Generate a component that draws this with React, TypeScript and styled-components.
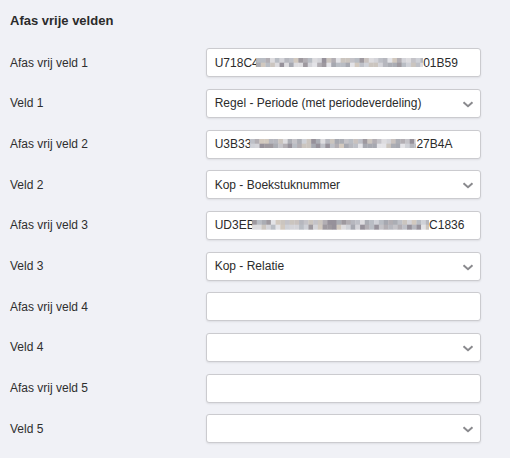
import React from "react";
import styled, { createGlobalStyle } from "styled-components";

const GlobalStyle = createGlobalStyle`
  html, body {
    margin: 0;
    padding: 0;
    background: #f0f1f6;
  }
  body {
    font-family: "Liberation Sans", Arial, sans-serif;
    color: #333;
  }
`;

const Page = styled.div`
  width: 510px;
  height: 458px;
  box-sizing: border-box;
  padding: 12px 29px 0 10px;
  background: #f0f1f6;
  overflow: hidden;
`;

const Title = styled.h3`
  margin: 0 0 18.3px 0;
  font-size: 13px;
  line-height: 18px;
  font-weight: bold;
  color: #2b2b2b;
`;

const Form = styled.div`
  display: grid;
  grid-template-columns: 195.7px 275.3px;
  grid-auto-rows: 29px;
  row-gap: 11.67px;
  align-items: center;
`;

const Label = styled.div`
  font-size: 12px;
  line-height: 16px;
  color: #2e2e2e;
`;

const Box = styled.div`
  position: relative;
  box-sizing: border-box;
  height: 29px;
  display: flex;
  align-items: center;
  padding: 0 8px;
  background: #fff;
  border: 1px solid #cbcbcf;
  border-radius: 3px;
  box-shadow: 0 1px 2px rgba(0, 0, 0, 0.08);
  font-size: 12px;
  color: #2b2b2b;
  white-space: nowrap;
  overflow: hidden;
`;

const Chevron = styled.svg`
  position: absolute;
  right: 5.5px;
  top: 50%;
  margin-top: -2.5px;
`;

const Fragment = styled.span`
  position: relative;
  z-index: 0;
`;

const MosaicSvg = styled.svg<{ $shift: number }>`
  position: relative;
  z-index: 1;
  flex: none;
  margin-left: ${(p) => p.$shift}px;
  margin-top: -1px;
`;

const palette = [
  "#c4c3c8", "#b2aeb3", "#d4d4d9", "#9e999f", "#cbc5bf", "#b6b7be",
  "#dddcdf", "#96919a", "#bec0c7", "#d2c9bf", "#abadb4", "#e3e3e7",
  "#a6a8b0", "#c9c2bf", "#b9bdc4", "#cfd1d7",
];

function Mosaic({ width, seed, shift }: { width: number; seed: number; shift: number }) {
  const cell = 4.7;
  const cols = Math.ceil(width / cell);
  const rects: React.ReactNode[] = [];
  let s = seed;
  const rnd = () => {
    s = (s * 9301 + 49297) % 233280;
    return s / 233280;
  };
  for (let r = 0; r < 2; r++) {
    for (let c = 0; c < cols; c++) {
      const color = palette[Math.floor(rnd() * palette.length)];
      rects.push(
        <rect key={`${r}-${c}`} x={c * cell} y={r * cell} width={cell + 0.3} height={cell + 0.3} fill={color} />
      );
    }
  }
  return (
    <MosaicSvg $shift={shift} width={width} height={cell * 2} viewBox={`0 0 ${width} ${cell * 2}`}>
      {rects}
    </MosaicSvg>
  );
}

type Field =
  | { kind: "code"; label: string; prefix: string; suffix: string; mosaic: number; shift: number; seed: number }
  | { kind: "text"; label: string }
  | { kind: "select"; label: string; value: string };

const fields: Field[] = [
  { kind: "code", label: "Afas vrij veld 1", prefix: "U718C4", suffix: "01B59", mosaic: 167, shift: -2.6, seed: 17 },
  { kind: "select", label: "Veld 1", value: "Regel - Periode (met periodeverdeling)" },
  { kind: "code", label: "Afas vrij veld 2", prefix: "U3B33", suffix: "27B4A", mosaic: 166, shift: -1, seed: 83 },
  { kind: "select", label: "Veld 2", value: "Kop - Boekstuknummer" },
  { kind: "code", label: "Afas vrij veld 3", prefix: "UD3EB", suffix: "C1836", mosaic: 177, shift: -2.6, seed: 151 },
  { kind: "select", label: "Veld 3", value: "Kop - Relatie" },
  { kind: "text", label: "Afas vrij veld 4" },
  { kind: "select", label: "Veld 4", value: "" },
  { kind: "text", label: "Afas vrij veld 5" },
  { kind: "select", label: "Veld 5", value: "" },
];

function ChevronIcon() {
  return (
    <Chevron width="12" height="7" viewBox="0 0 12 7">
      <polyline points="1.5,1.2 6,5.2 10.5,1.2" fill="none" stroke="#8a8a8e" strokeWidth="2" />
    </Chevron>
  );
}

export default function App() {
  return (
    <>
      <GlobalStyle />
      <Page>
        <Title>Afas vrije velden</Title>
        <Form>
          {fields.map((f) => (
            <React.Fragment key={f.label}>
              <Label>{f.label}</Label>
              {f.kind === "code" && (
                <Box>
                  <Fragment>{f.prefix}</Fragment>
                  <Mosaic width={f.mosaic} seed={f.seed} shift={f.shift} />
                  <Fragment>{f.suffix}</Fragment>
                </Box>
              )}
              {f.kind === "text" && <Box />}
              {f.kind === "select" && (
                <Box>
                  {f.value}
                  <ChevronIcon />
                </Box>
              )}
            </React.Fragment>
          ))}
        </Form>
      </Page>
    </>
  );
}
